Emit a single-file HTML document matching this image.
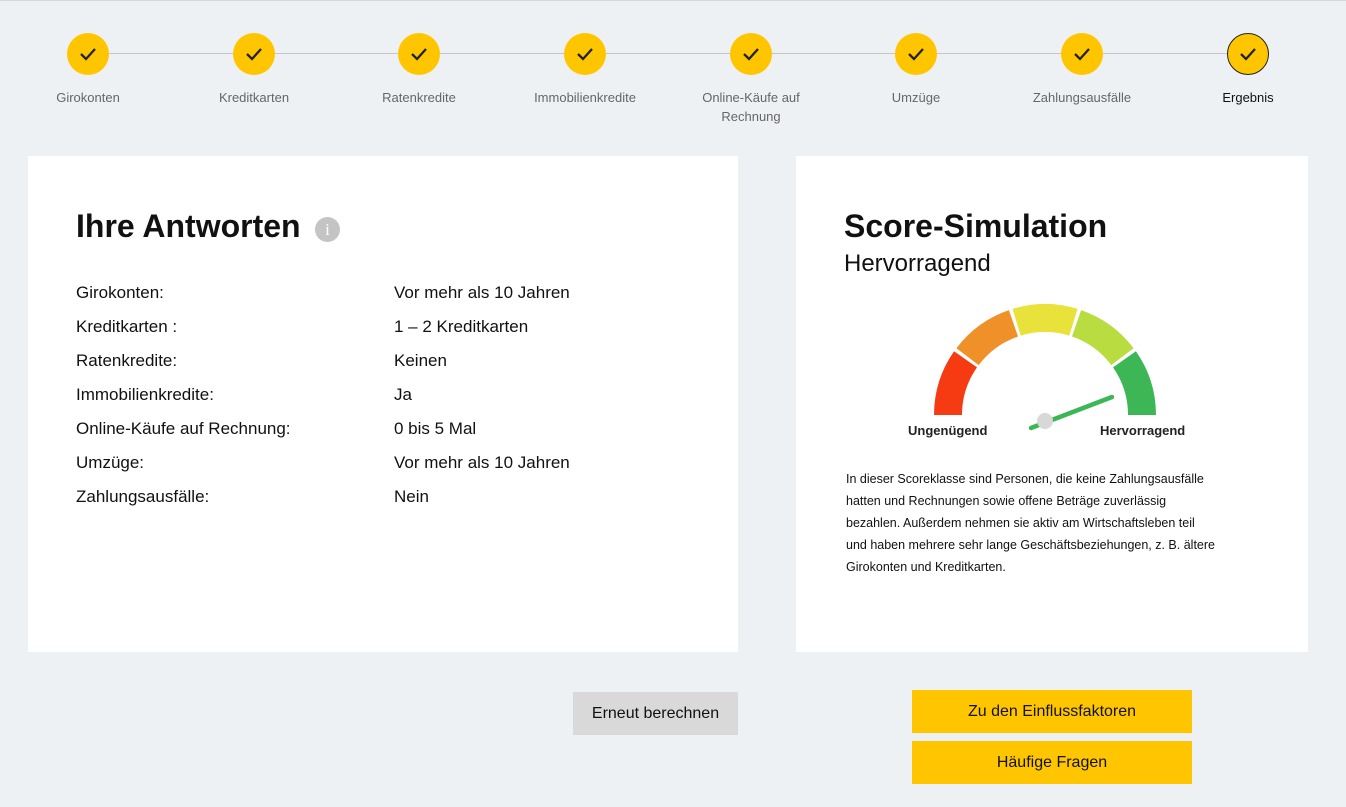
<!DOCTYPE html>
<html><head><meta charset="utf-8"><style>
*{margin:0;padding:0;box-sizing:border-box}
body{width:1346px;height:807px;background:#eef1f4;font-family:"Liberation Sans","DejaVu Sans",sans-serif;position:relative;overflow:hidden;border-top:1px solid #d5d8db}
.line{position:absolute;top:52px;left:88px;width:1160px;height:1px;background:#c4c6c8}
.st{position:absolute;top:32px;width:42px;height:42px;border-radius:50%;background:#ffc600;margin-left:-21px}
.st svg{position:absolute;left:11px;top:11px}
.st.last{border:1.5px solid #222}
.st.last svg{left:9.5px;top:9.5px}
.lb{position:absolute;top:87px;width:140px;margin-left:-70px;text-align:center;font-size:13px;color:#666;line-height:19px}
.panel{position:absolute;background:#fff}
h2{position:absolute;font-size:32px;font-weight:bold;color:#111}
.row{position:absolute;left:76px;font-size:17px;color:#111}
.row span{position:absolute;left:318px;white-space:nowrap}
.btn{position:absolute;font-size:16px;color:#111;text-align:center}
</style></head><body>
<div class="line"></div>
<div class="st" style="left:88px"><svg width="20" height="20"><path d="M3 10 L8 15 L17 5" stroke="#222" stroke-width="2.3" fill="none"/></svg></div>
<div class="st" style="left:254px"><svg width="20" height="20"><path d="M3 10 L8 15 L17 5" stroke="#222" stroke-width="2.3" fill="none"/></svg></div>
<div class="st" style="left:419px"><svg width="20" height="20"><path d="M3 10 L8 15 L17 5" stroke="#222" stroke-width="2.3" fill="none"/></svg></div>
<div class="st" style="left:585px"><svg width="20" height="20"><path d="M3 10 L8 15 L17 5" stroke="#222" stroke-width="2.3" fill="none"/></svg></div>
<div class="st" style="left:751px"><svg width="20" height="20"><path d="M3 10 L8 15 L17 5" stroke="#222" stroke-width="2.3" fill="none"/></svg></div>
<div class="st" style="left:916px"><svg width="20" height="20"><path d="M3 10 L8 15 L17 5" stroke="#222" stroke-width="2.3" fill="none"/></svg></div>
<div class="st" style="left:1082px"><svg width="20" height="20"><path d="M3 10 L8 15 L17 5" stroke="#222" stroke-width="2.3" fill="none"/></svg></div>
<div class="st last" style="left:1248px"><svg width="20" height="20"><path d="M3 10 L8 15 L17 5" stroke="#222" stroke-width="2.3" fill="none"/></svg></div>
<div class="lb" style="left:88px">Girokonten</div>
<div class="lb" style="left:254px">Kreditkarten</div>
<div class="lb" style="left:419px">Ratenkredite</div>
<div class="lb" style="left:585px">Immobilienkredite</div>
<div class="lb" style="left:751px">Online-Käufe auf Rechnung</div>
<div class="lb" style="left:916px">Umzüge</div>
<div class="lb" style="left:1082px">Zahlungsausfälle</div>
<div class="lb" style="left:1248px;color:#111">Ergebnis</div>

<div class="panel" style="left:28px;top:155px;width:710px;height:496px"></div>
<h2 style="left:76px;top:207px">Ihre Antworten</h2>
<div style="position:absolute;left:315px;top:216px;width:25px;height:25px;border-radius:50%;background:#c4c4c4;color:#fff;font-size:17px;text-align:center;line-height:25px;font-family:'Liberation Serif',serif">i</div>
<div class="row" style="top:282px">Girokonten:<span>Vor mehr als 10 Jahren</span></div>
<div class="row" style="top:316px">Kreditkarten :<span>1 – 2 Kreditkarten</span></div>
<div class="row" style="top:350px">Ratenkredite:<span>Keinen</span></div>
<div class="row" style="top:384px">Immobilienkredite:<span>Ja</span></div>
<div class="row" style="top:418px">Online-Käufe auf Rechnung:<span>0 bis 5 Mal</span></div>
<div class="row" style="top:452px">Umzüge:<span>Vor mehr als 10 Jahren</span></div>
<div class="row" style="top:486px">Zahlungsausfälle:<span>Nein</span></div>

<div class="panel" style="left:796px;top:155px;width:512px;height:496px"></div>
<h2 style="left:844px;top:207px">Score-Simulation</h2>
<div style="position:absolute;left:844px;top:249px;font-size:24px;color:#111">Hervorragend</div>
<svg style="position:absolute;left:900px;top:290px" width="300" height="150">
<path d="M34 124 A111 111 0 0 1 54.1 60.3 L77 76.4 A83 83 0 0 0 62 124 Z" fill="#f63b12"/>
<path d="M56.4 57.2 A111 111 0 0 1 108.9 19.1 L118 45.5 A83 83 0 0 0 78.7 74.1 Z" fill="#f09028"/>
<path d="M112.5 17.9 A111 111 0 0 1 177.5 17.9 L169.3 44.6 A83 83 0 0 0 120.7 44.6 Z" fill="#e8e23a"/>
<path d="M181.1 19.1 A111 111 0 0 1 233.6 57.2 L211.3 74.1 A83 83 0 0 0 172 45.5 Z" fill="#b9dc40"/>
<path d="M235.9 60.3 A111 111 0 0 1 256 124 L228 124 A83 83 0 0 0 213 76.4 Z" fill="#3db656"/>
<line x1="131" y1="137" x2="212" y2="106" stroke="#3db656" stroke-width="4.5" stroke-linecap="round"/>
<circle cx="145" cy="130" r="8" fill="#d8d8d8"/>
<text x="8" y="144" font-size="13" font-weight="bold" fill="#222" font-family="Liberation Sans, sans-serif">Ungenügend</text>
<text x="200" y="144" font-size="13" font-weight="bold" fill="#222" font-family="Liberation Sans, sans-serif">Hervorragend</text>
</svg>
<div style="position:absolute;left:846px;top:467px;white-space:nowrap;font-size:12.5px;line-height:22px;color:#111">In dieser Scoreklasse sind Personen, die keine Zahlungsausfälle<br>hatten und Rechnungen sowie offene Beträge zuverlässig<br>bezahlen. Außerdem nehmen sie aktiv am Wirtschaftsleben teil<br>und haben mehrere sehr lange Geschäftsbeziehungen, z. B. ältere<br>Girokonten und Kreditkarten.</div>

<div class="btn" style="left:573px;top:691px;width:165px;height:43px;line-height:43px;background:#d9d9d9">Erneut berechnen</div>
<div class="btn" style="left:912px;top:689px;width:280px;height:43px;line-height:43px;background:#ffc600">Zu den Einflussfaktoren</div>
<div class="btn" style="left:912px;top:740px;width:280px;height:43px;line-height:43px;background:#ffc600">Häufige Fragen</div>
</body></html>
